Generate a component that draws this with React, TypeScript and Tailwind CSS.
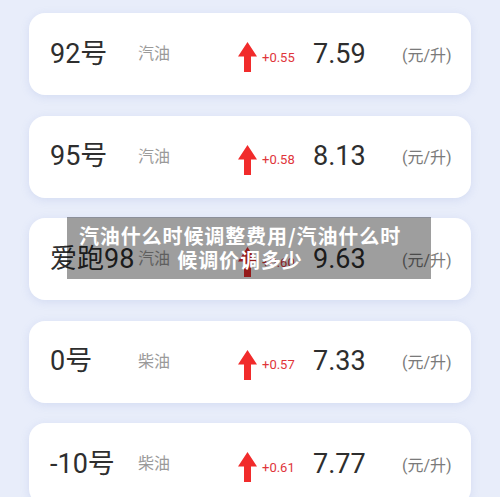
const rows = [
  { name: "92号", kind: "汽油", change: "+0.55", price: "7.59" },
  { name: "95号", kind: "汽油", change: "+0.58", price: "8.13" },
  { name: "爱跑98", kind: "汽油", change: "+0.60", price: "9.63" },
  { name: "0号", kind: "柴油", change: "+0.57", price: "7.33" },
  { name: "-10号", kind: "柴油", change: "+0.61", price: "7.77" },
];

const UpArrow = () => (
  <svg width="19" height="30" viewBox="0 0 19 30" className="shrink-0">
    <polygon points="9.5,0 19,14.5 13,14.5 13,30 6,30 6,14.5 0,14.5" fill="#f12b2b" />
  </svg>
);

export default function App() {
  return (
    <div
      className="relative h-[497px] w-[500px] overflow-hidden bg-[#e8edfa]"
      style={{ fontFamily: "Roboto, 'Noto Sans CJK SC', sans-serif" }}
    >
      <div className="flex flex-col gap-[20.5px] px-[29px] pt-[13px]">
        {rows.map((r) => (
          <div
            key={r.name}
            className="flex h-[82px] shrink-0 items-center rounded-[16px] bg-white pl-[21px] shadow-[0_2px_8px_rgba(140,160,220,0.22)]"
          >
            <div className="w-[88px] whitespace-nowrap text-[27px] leading-none text-[#2e2e2e]">
              {r.name}
            </div>
            <div className="w-[100px] text-[16px] leading-none text-[#9a9a9a]">{r.kind}</div>
            <div className="flex w-[75px] items-center pt-[6px]">
              <UpArrow />
              <span className="ml-[5px] text-[13px] leading-none text-[#e0353a]">{r.change}</span>
            </div>
            <div className="w-[89px] text-[27px] leading-none text-[#2e2e2e]">{r.price}</div>
            <div className="pt-[3px] text-[16px] leading-none text-[#7a7a7a]">(元/升)</div>
          </div>
        ))}
      </div>

      {/* title banner over the third card */}
      <div className="absolute left-[67px] top-[217px] flex h-[62px] w-[364px] items-center bg-[rgba(0,0,0,0.38)] pl-[6px] pr-[24px]">
        <p
          className="w-full text-center text-[20px] font-bold leading-[24px] tracking-[0.9px] text-white"
          style={{ fontFamily: "'Noto Sans CJK SC', sans-serif" }}
        >
          汽油什么时候调整费用/汽油什么时候调价调多少
        </p>
      </div>
    </div>
  );
}
